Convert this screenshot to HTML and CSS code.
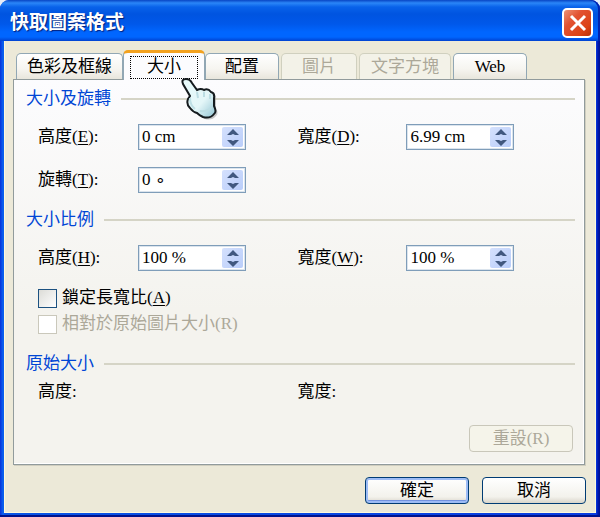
FILE: index.html
```
<!DOCTYPE html>
<html lang="zh-Hant">
<head>
  <meta charset="utf-8">
  <title>快取圖案格式</title>
  <link rel="stylesheet" href="styles.css">
</head>
<body>
  <svg width="0" height="0" class="defs">
    <symbol id="up" viewBox="0 0 12 7"><path d="M6 0 L12 6 H8 L6 5 L4 6 H0 Z" fill="#41587f"/></symbol>
    <symbol id="down" viewBox="0 0 12 7"><path d="M6 7 L0 1 H4 L6 2 L8 1 H12 Z" fill="#41587f"/></symbol>
  </svg>
  <div class="dialog">
    <div class="titlebar">
      <h1>快取圖案格式</h1>
      <button class="close" aria-label="關閉">
        <svg width="18" height="18" viewBox="0 0 18 18"><path d="M2 2 L16 16 M16 2 L2 16" stroke="#fff" stroke-width="3"/></svg>
      </button>
    </div>

    <div class="client">
      <div class="tabs" role="tablist">
        <button class="tab tab-colors" role="tab">色彩及框線</button>
        <button class="tab tab-size active" role="tab" aria-selected="true"><span>大小</span>
          <svg class="pointer" width="38" height="44" viewBox="0 0 38 44">
            <defs>
              <linearGradient id="skin" x1="0" y1="0" x2="1" y2="1">
                <stop offset="0" stop-color="#e8fbfb"/>
                <stop offset=".6" stop-color="#e4f6f8"/>
                <stop offset="1" stop-color="#8fc3d2"/>
              </linearGradient>
            </defs>
            <path d="M2 6 Q0 1 5 1 Q9 1 11 5 L16 12 Q20 10 23 12 Q27 10 30 14 Q34 15 33 20 L33 28 Q36 34 33 36 Q29 41 22 39 Q18 37 16 35 Q12 34 9 30 Q5 26 7 21 L9 18 Z" transform="translate(2 2)" fill="#777" opacity=".4"/>
            <path d="M2 6 Q0 1 5 1 Q9 1 11 5 L16 12 Q20 10 23 12 Q27 10 30 14 Q34 15 33 20 L33 28 Q36 34 33 36 Q29 41 22 39 Q18 37 16 35 Q12 34 9 30 Q5 26 7 21 L9 18 Z" fill="url(#skin)" stroke="#151b1e" stroke-width="2"/>
            <path d="M16 14 L17 20 M23 14 V19 M29 16 V21 M19 33 Q26 34 31 29" fill="none" stroke="#bcdde3" stroke-width="2"/>
            <path d="M9 20 Q9 27 14 31" fill="none" stroke="#bfe0e6" stroke-width="2"/>
          </svg>
        </button>
        <button class="tab tab-layout" role="tab">配置</button>
        <button class="tab tab-picture" role="tab" disabled>圖片</button>
        <button class="tab tab-text" role="tab" disabled>文字方塊</button>
        <button class="tab tab-web" role="tab">Web</button>
      </div>

      <div class="panel" role="tabpanel">
        <h2>大小及旋轉</h2>
        <div class="fields">
          <label for="height">高度(<u>E</u>):</label>
          <div class="spin">
            <input type="text" id="height" value="0 cm">
            <div class="arrows">
              <button aria-label="增加高度"><svg><use href="#up"/></svg></button>
              <button aria-label="減少高度"><svg><use href="#down"/></svg></button>
            </div>
          </div>
          <label for="width">寬度(<u>D</u>):</label>
          <div class="spin">
            <input type="text" id="width" value="6.99 cm">
            <div class="arrows">
              <button aria-label="增加寬度"><svg><use href="#up"/></svg></button>
              <button aria-label="減少寬度"><svg><use href="#down"/></svg></button>
            </div>
          </div>
          <label for="rotation">旋轉(<u>T</u>):</label>
          <div class="spin">
            <input type="text" id="rotation" value="0 ∘">
            <div class="arrows">
              <button aria-label="增加旋轉"><svg><use href="#up"/></svg></button>
              <button aria-label="減少旋轉"><svg><use href="#down"/></svg></button>
            </div>
          </div>
        </div>

        <h2>大小比例</h2>
        <div class="fields">
          <label for="scaleH">高度(<u>H</u>):</label>
          <div class="spin">
            <input type="text" id="scaleH" value="100 %">
            <div class="arrows">
              <button aria-label="增加高度比例"><svg><use href="#up"/></svg></button>
              <button aria-label="減少高度比例"><svg><use href="#down"/></svg></button>
            </div>
          </div>
          <label for="scaleW">寬度(<u>W</u>):</label>
          <div class="spin">
            <input type="text" id="scaleW" value="100 %">
            <div class="arrows">
              <button aria-label="增加寬度比例"><svg><use href="#up"/></svg></button>
              <button aria-label="減少寬度比例"><svg><use href="#down"/></svg></button>
            </div>
          </div>
        </div>
        <div class="checks">
          <label><input type="checkbox">鎖定長寬比(<u>A</u>)</label>
          <label class="off"><input type="checkbox" disabled>相對於原始圖片大小(R)</label>
        </div>

        <h2>原始大小</h2>
        <div class="fields original">
          <span>高度:</span><span></span>
          <span>寬度:</span><span></span>
        </div>
        <div class="reset">
          <button class="btn" disabled>重設(R)</button>
        </div>
      </div>

      <div class="footer">
        <button class="btn default">確定</button>
        <button class="btn">取消</button>
      </div>
    </div>
  </div>
</body>
</html>
```
FILE: styles.css
```
* { box-sizing: border-box; }

body {
  margin: 0;
  background: #e6ecf8;
  color: #000;
}
body, button, input {
  font-family: "Liberation Serif", "Noto Sans CJK TC", serif;
  font-size: 17px;
  line-height: 24px;
}
button { padding: 0; color: #000; }
u { text-decoration-skip-ink: none; text-underline-offset: 2px; }
.defs { position: absolute; }

.dialog {
  display: flex;
  flex-direction: column;
  min-height: 100vh;
  padding: 0 4px 4px;
  border-radius: 9px 9px 0 0;
  background: linear-gradient(90deg, #0831d9, #0a62f0 3px, #0a55e5 5px, #0a3ce0 calc(100% - 4px), #0018b0 calc(100% - 2px), #00118c);
  box-shadow: inset 0 -2px #00138c;
}

.titlebar {
  display: flex;
  align-items: center;
  justify-content: space-between;
  height: 41px;
  margin: 0 -4px;
  padding: 4px 7px 0 10px;
  border-radius: 9px 9px 0 0;
  background: linear-gradient(#0845c4, #2a86f8 3px, #0862ea 7px, #0054e0 14px, #0058ea 24px, #0066ff 32px, #0066ff 37px, #0042d0 41px);
  box-shadow: inset -2px 0 #0022b0;
}
.titlebar h1 {
  margin: 0;
  color: #fff;
  font-size: 19px;
  text-shadow: 1px 1px 1px #00207c;
}
.close {
  display: flex;
  align-items: center;
  justify-content: center;
  width: 31px;
  height: 30px;
  border: 2px solid #fff;
  border-radius: 5px;
  background: linear-gradient(135deg, #ee9276, #e25232 35%, #dc4316 75%, #b93008);
}

.client {
  flex: 1;
  padding: 9px 10px 8px 8px;
  border: 1px solid #fdf9dc;
  border-top: 0;
  background: #ece9d8;
}

.tabs {
  display: flex;
  align-items: flex-end;
  padding-left: 3px;
}
.tab {
  height: 26px;
  border: 1px solid #91a7b4;
  border-bottom: 0;
  border-radius: 5px 5px 0 0;
  background: linear-gradient(#fff, #f6f5f0 60%, #e8e6dc);
}
.tab:disabled {
  margin-right: 2px;
  border-color: #d0d0bf;
  background: #f3f2e8;
  color: #aca899;
}
.tab-colors { width: 107px; }
.tab-size { width: 82px; }
.tab-layout { width: 74px; margin-right: 2px; }
.tab-picture { width: 76px; }
.tab-text { width: 92px; }
.tab-web { width: 74px; }
.tab.active {
  position: relative;
  z-index: 1;
  height: 30px;
  margin-bottom: -1px;
  padding: 2px 6px 1px;
  border-top: 3px solid #f3a21f;
  background: #fcfcfe;
}
.tab.active span {
  display: block;
  height: 23px;
  border: 1px dotted #000;
  line-height: 20px;
}
/* hand cursor hovering over the active tab */
.pointer {
  position: absolute;
  left: 57px;
  top: 25px;
}

.panel {
  padding: 7px 9px 12px 12px;
  border: 1px solid #919b9c;
  background: linear-gradient(#fcfcfe, #f4f3ee 60%);
  box-shadow: 1px 1px #d0cebf, inset -1px -1px #fff;
}
.panel h2 {
  display: flex;
  align-items: center;
  gap: 10px;
  margin: 15px 0 13px;
  color: #0046d5;
  font-size: 17px;
  font-weight: normal;
}
.panel h2:first-child { margin-top: 0; }
.panel h2::after {
  content: "";
  flex: 1;
  height: 2px;
  background: #d5d4c6;
}

.fields {
  display: grid;
  grid-template-columns: 100px 159fr 109px 168fr;
  row-gap: 17px;
  align-items: center;
  padding-left: 12px;
}
.original { margin-top: -9px; }

.spin {
  display: flex;
  width: 108px;
  height: 26px;
  padding: 2px;
  border: 1px solid #7f9db9;
  outline: 1px solid #dbe4ed;
  outline-offset: -2px;
  background: #fff;
}
.spin input {
  flex: 1;
  min-width: 0;
  padding: 0 0 0 1px;
  border: 0;
  background: none;
  line-height: 20px;
}
.arrows {
  display: flex;
  flex-direction: column;
  width: 21px;
  border-radius: 2px;
  background: linear-gradient(135deg, #d5e1fd, #b9cdfa);
}
.arrows button {
  display: flex;
  flex: 1;
  align-items: center;
  justify-content: center;
  border: 0;
  background: none;
}
.arrows svg { width: 12px; height: 7px; }

.checks {
  margin-top: 14px;
  padding-left: 12px;
}
.checks label {
  display: flex;
  align-items: center;
  height: 26px;
}
.checks .off { color: #aca899; }
.checks input {
  appearance: none;
  width: 19px;
  height: 19px;
  margin: 0 5px 0 0;
  border: 1px solid #1c5180;
  background: linear-gradient(135deg, #dcdcd7, #fff);
}
.checks input:disabled {
  border-color: #cac8bb;
  background: #fff;
}

.btn {
  width: 104px;
  height: 27px;
  border: 1px solid #003c74;
  border-radius: 4px;
  background: linear-gradient(#fff, #f3f2ec 75%, #d9d5ca);
}
.btn.default { box-shadow: inset 0 0 0 2px #9dbcf5, inset 0 -3px #7393e0; }
.btn:disabled {
  border-color: #c9c7ba;
  background: #f5f4ea;
  color: #aca899;
}
.reset {
  display: flex;
  justify-content: flex-end;
  margin-top: 21px;
  padding-right: 2px;
}
.footer {
  display: flex;
  justify-content: flex-end;
  gap: 13px;
  margin: 12px -1px 0 0;
}
```
